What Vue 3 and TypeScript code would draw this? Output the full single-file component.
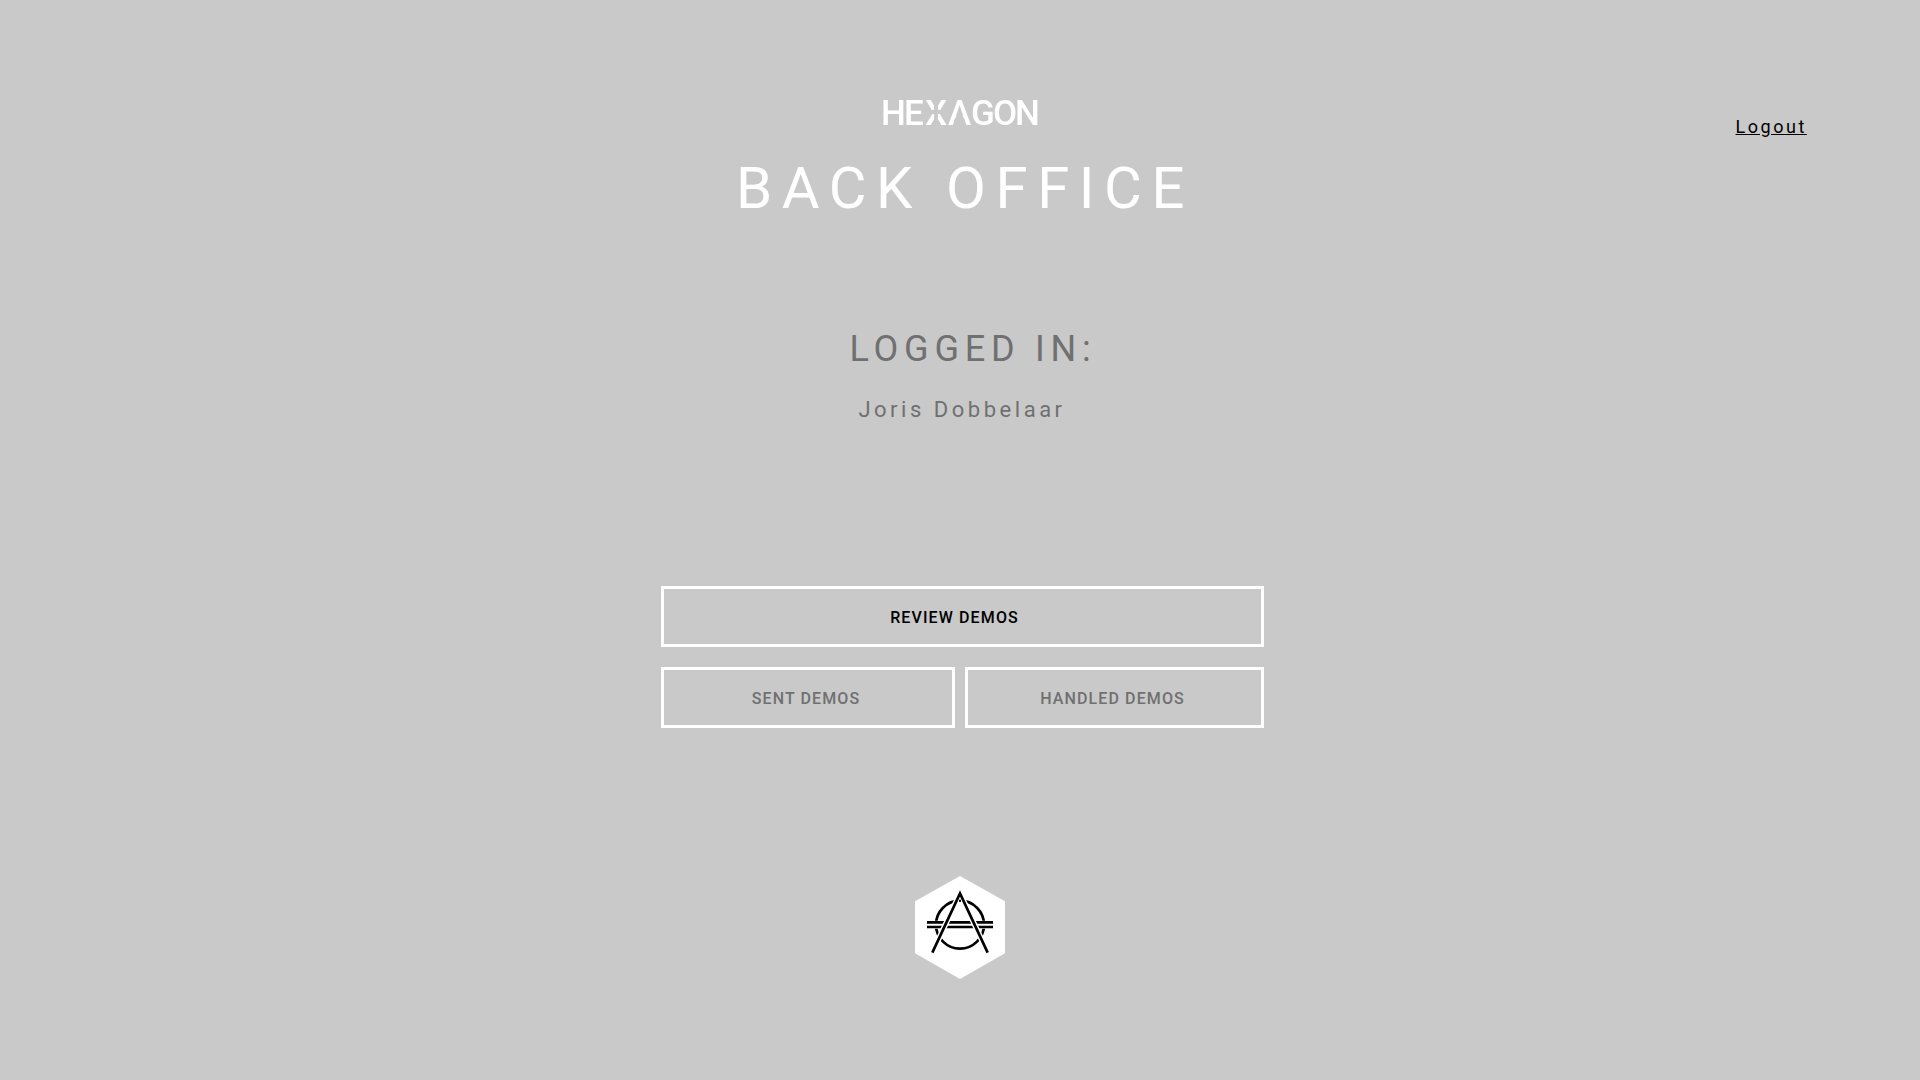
<script setup lang="ts">
const user: string = 'Joris Dobbelaar'
</script>

<template>
  <div class="page">
    <header class="header">
      <svg class="wordmark" viewBox="0 0 160 44" role="img" aria-label="Hexagon">
        <defs>
          <mask id="cuts" maskUnits="userSpaceOnUse" x="0" y="0" width="160" height="44">
            <rect width="160" height="44" fill="#fff" />
            <path d="M56 16v13M50 22h12" stroke="#000" stroke-width="4" />
            <path d="M77 24H82L85 31H74Z" fill="#000" />
          </mask>
        </defs>
        <text x="1 24 45 68 91 113 135" y="35" mask="url(#cuts)">HEXAGON</text>
      </svg>
      <h1>BACK OFFICE</h1>
      <a class="logout" href="#">Logout</a>
    </header>

    <section class="account">
      <h2>LOGGED IN:</h2>
      <p>{{ user }}</p>
    </section>

    <nav class="actions">
      <button type="button" class="review">REVIEW DEMOS</button>
      <button type="button" class="sent">SENT DEMOS</button>
      <button type="button" class="handled">HANDLED DEMOS</button>
    </nav>

    <footer>
      <svg class="emblem" viewBox="30 32 270 309" aria-hidden="true">
        <path d="M165 32 300 108V264L165 341 30 264V108Z" fill="#fff" />
        <g fill="none" stroke="#fff" stroke-width="17">
          <circle cx="165" cy="178" r="72" stroke="#000" stroke-width="8" />
          <path d="M66 178H264" stroke-width="24" />
          <path d="M66 171H264M66 185H264" stroke="#000" stroke-width="8" />
          <path d="M82 262 165 84 248 262" />
          <path d="M82 262 165 84 248 262" stroke="#000" stroke-width="8" />
          <path d="M162 106H168" stroke="#000" stroke-width="5" />
        </g>
      </svg>
    </footer>
  </div>
</template>

<style>
body {
  margin: 0;
  background: #c9c9c9;
}
</style>

<style scoped>
.page {
  box-sizing: border-box;
  min-height: 100vh;
  padding-top: 90px;
  display: flex;
  flex-direction: column;
  align-items: center;
  font-family: Roboto, "Liberation Sans", sans-serif;
  color: #707070;
}
.header {
  width: 100%;
  position: relative;
  display: flex;
  flex-direction: column;
  align-items: center;
}
.wordmark {
  width: 160px;
  height: 44px;
  fill: #fff;
  font-size: 35px;
  font-weight: 500;
}
h1 {
  margin: 19px 0 0;
  padding-left: 10px;
  font-size: 58px;
  line-height: 70px;
  font-weight: 400;
  letter-spacing: 0.165em;
  color: #fff;
}
.logout {
  position: absolute;
  right: 6%;
  top: 26px;
  margin-right: -2px;
  font-size: 18px;
  line-height: 22px;
  letter-spacing: 0.14em;
  color: #000;
}
.account {
  margin-top: 105px;
  display: flex;
  flex-direction: column;
  align-items: center;
}
h2 {
  margin: 0;
  padding-left: 26px;
  font-size: 36px;
  line-height: 42px;
  font-weight: 400;
  letter-spacing: 0.16em;
}
.account p {
  margin: 26px 0 0;
  padding-left: 4px;
  font-size: 22px;
  line-height: 28px;
  letter-spacing: 0.16em;
}
.actions {
  width: 603px;
  max-width: 100%;
  margin-top: 162px;
  padding-left: 4px;
  display: grid;
  grid-template-columns: 294fr 299fr;
  gap: 20px 10px;
}
.actions button {
  height: 61px;
  padding: 2px 3px 0 0;
  border: 3px solid #fff;
  background: transparent;
  font-family: inherit;
  font-size: 16px;
  font-weight: 500;
  letter-spacing: 0.07em;
  color: #707070;
}
.actions .review {
  grid-column: 1 / -1;
  padding-right: 15px;
  color: #000;
}
footer {
  margin-top: 148px;
}
.emblem {
  display: block;
  width: 90px;
  height: 103px;
}
</style>
